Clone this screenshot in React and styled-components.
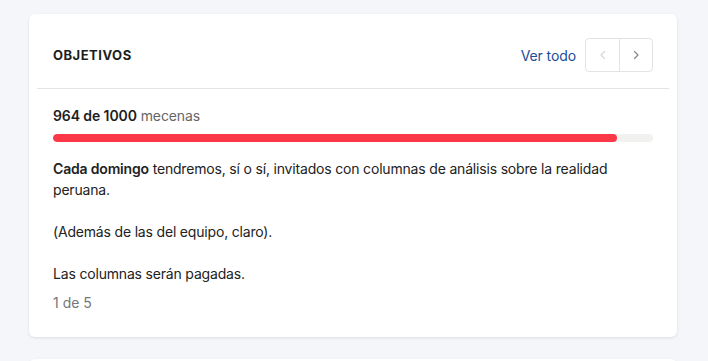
import React from 'react';
import styled, { createGlobalStyle } from 'styled-components';

const GlobalStyle = createGlobalStyle`
  body {
    margin: 0;
    background: #f5f6fa;
    font-family: Inter, "Noto Sans", sans-serif;
    color: #222;
  }
`

const Page = styled.div`
  padding: 14px 31px 0 29px;
  display: flex;
  flex-direction: column;
  gap: 22px;
`

const Card = styled.section`
  background: #fff;
  border-radius: 6px;
  box-shadow: 0 1px 3px rgba(0, 0, 0, 0.1);
  min-height: ${p => p.$empty ? '80px' : 'auto'};
`

const Header = styled.header`
  margin: 0 8px;
  padding: 24px 16px 16px;
  display: flex;
  align-items: center;
  justify-content: space-between;
  border-bottom: 1px solid #e4e3df;
`

const Title = styled.h2`
  margin: 0;
  font-size: 13px;
  font-weight: 700;
  letter-spacing: 0.5px;
  color: #1e1e1e;
`

const Actions = styled.div`
  display: flex;
  align-items: center;
  gap: 9px;
`

const SeeAll = styled.a`
  color: #1c4d98;
  font-size: 14px;
  letter-spacing: -0.1px;
  text-decoration: none;
`

const Pager = styled.div`
  display: flex;
  border: 1px solid #e4e3df;
  border-radius: 4px;
`

const PagerButton = styled.button`
  width: 33px;
  height: 32px;
  padding: 0;
  border: none;
  background: none;
  display: flex;
  align-items: center;
  justify-content: center;
  color: ${p => p.disabled ? '#d8d8d8' : '#8a8a8a'};
  & + & {
    border-left: 1px solid #e4e3df;
  }
`

const Body = styled.div`
  padding: 16px 24px 24px;
`

const Count = styled.div`
  font-size: 14px;
  line-height: 21px;
  letter-spacing: -0.1px;
  color: #666;
  b {
    font-weight: 600;
    color: #1e1e1e;
  }
`

const Track = styled.div`
  margin-top: 8px;
  height: 8px;
  border-radius: 4px;
  background: #f1f1f0;
  overflow: hidden;
`

const Fill = styled.div`
  height: 100%;
  border-radius: 4px;
  background: #fa3848;
`

const Text = styled.p`
  margin: 16px 0 0;
  font-size: 14px;
  line-height: 21px;
  letter-spacing: -0.18px;
  color: #222;
  b {
    font-weight: 600;
  }
`

const Step = styled.div`
  margin-top: 8px;
  font-size: 14px;
  line-height: 21px;
  color: #777;
`

const Chevron = ({ dir }) => (
  <svg width="12" height="12" viewBox="0 0 12 12" fill="none" stroke="currentColor" strokeWidth="1.3" strokeLinecap="round" strokeLinejoin="round">
    {dir === 'left' ? <path d="M7.5 2.5 4 6l3.5 3.5" /> : <path d="M4.5 2.5 8 6 4.5 9.5" />}
  </svg>
)

export default function App() {
  const current = 964
  const goal = 1000

  return (
    <>
      <GlobalStyle />
      <Page>
        <Card>
          <Header>
            <Title>OBJETIVOS</Title>
            <Actions>
              <SeeAll href="#">Ver todo</SeeAll>
              <Pager>
                <PagerButton disabled><Chevron dir="left" /></PagerButton>
                <PagerButton><Chevron dir="right" /></PagerButton>
              </Pager>
            </Actions>
          </Header>
          <Body>
            <Count><b>{current} de {goal}</b> mecenas</Count>
            <Track>
              <Fill style={{ width: '94%' }} />
            </Track>
            <Text>
              <b>Cada domingo</b> tendremos, sí o sí, invitados con columnas de análisis sobre la realidad peruana.
              <br /><br />
              (Además de las del equipo, claro).
              <br /><br />
              Las columnas serán pagadas.
            </Text>
            <Step>1 de 5</Step>
          </Body>
        </Card>
        <Card $empty />
      </Page>
    </>
  )
}
